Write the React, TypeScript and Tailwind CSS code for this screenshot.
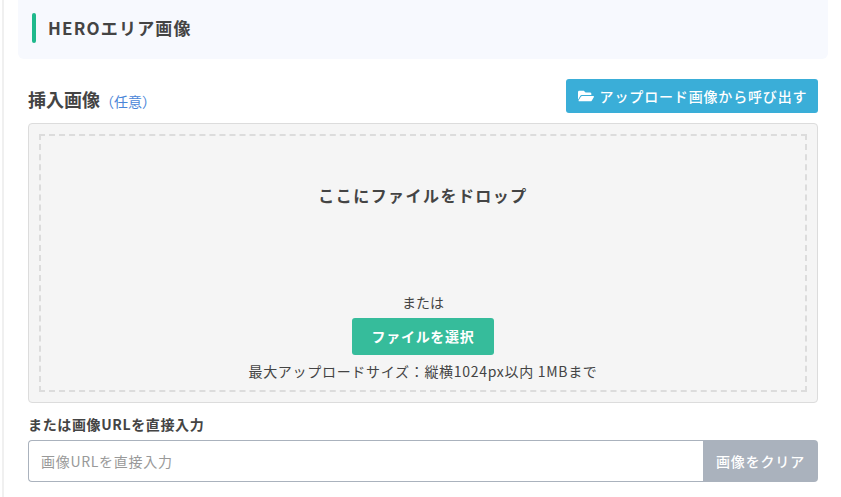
import { FaFolderOpen } from 'react-icons/fa';

const jp = "font-['Noto_Sans_CJK_JP','Noto_Sans',sans-serif]";

export default function App() {
  return (
    <div className={`${jp} h-[497px] w-[841px] overflow-hidden bg-white text-[#444]`}>
      <div className="h-full border-l-2 border-[#f0f0f0] ml-[2px] pl-[14px] pr-[13px]">
        {/* section heading */}
        <div className="flex h-[59px] items-start rounded-b-md bg-[#f7f9fe] pl-[14px] pt-[13px]">
          <div className="h-[30px] w-[4px] rounded-sm bg-[#1fb98c]" />
          <h2 className="ml-3 text-[17px] leading-[30px] font-bold tracking-[0.07em]">HEROエリア画像</h2>
        </div>

        <div className="pl-[10px] pr-[10px]">
          {/* label row */}
          <div className="mt-5 flex h-[34px] items-center justify-between">
            <div className="flex items-baseline pt-[7px]">
              <span className="text-[18px] font-bold">挿入画像</span>
              <span className="text-[14px] text-[#4a86d8]">（任意）</span>
            </div>
            <button className="flex h-[34px] w-[252px] items-center justify-center gap-[6px] rounded-[3px] bg-[#3aaed8] pl-[1px] text-[14px] font-medium tracking-[0.06em] text-white">
              <FaFolderOpen className="h-[16px] w-[16px]" />
              <span>アップロード画像から呼び出す</span>
            </button>
          </div>

          {/* drop zone */}
          <div className="mt-[10px] h-[280px] rounded border border-[#dcdcdc] bg-[#f5f5f5] p-[10px]">
            <div className="flex h-full flex-col items-center border-2 border-dashed border-[#dcdcdc]">
              <p className="mt-[46px] text-[16px] leading-[26px] font-bold tracking-[0.09em]">ここにファイルをドロップ</p>
              <p className="mt-[84px] text-[14px] leading-[20px]">または</p>
              <button className="mt-[6px] h-[37px] w-[142px] rounded-[3px] bg-[#36bc9b] text-[14px] font-bold tracking-[0.05em] text-white">
                ファイルを選択
              </button>
              <p className="mt-[6px] text-[14px] leading-[20px] tracking-[0.05em]">最大アップロードサイズ：縦横1024px以内 1MBまで</p>
            </div>
          </div>

          {/* url input */}
          <label className="mt-[11px] block text-[14px] leading-[20px] font-bold tracking-[0.045em]">または画像URLを直接入力</label>
          <div className="mt-[6px] flex h-[42px]">
            <input
              placeholder="画像URLを直接入力"
              className="min-w-0 flex-1 rounded-l border border-r-0 border-[#aab2bd] bg-white px-3 text-[14px] tracking-[0.05em] outline-none placeholder:text-[#999]"
            />
            <button className="w-[115px] rounded-r bg-[#aab2bd] text-[14px] font-medium tracking-[0.06em] text-white">
              画像をクリア
            </button>
          </div>
        </div>
      </div>
    </div>
  );
}
